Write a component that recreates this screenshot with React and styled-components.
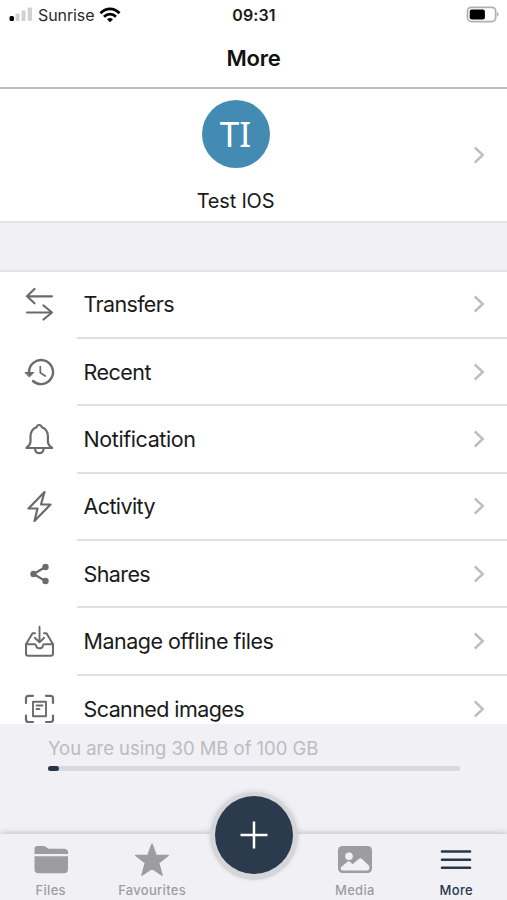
import React from "react";
import styled, { createGlobalStyle } from "styled-components";

const Global = createGlobalStyle`
  * { box-sizing: border-box; }
  body { margin: 0; background: #fff; font-family: Inter, "Liberation Sans", sans-serif; color: #1a1a1a; }
  svg { display: block; flex: none; }
`;

const Screen = styled.div`
  width: 507px;
  height: 900px;
  display: flex;
  flex-direction: column;
  overflow: hidden;
  background: #fff;
`;

const StatusBar = styled.header`
  height: 29px;
  flex: none;
  display: grid;
  grid-template-columns: 1fr auto 1fr;
  align-items: center;
  padding: 0 8px 0 9px;
`;

const Carrier = styled.div`
  display: flex;
  align-items: center;
  gap: 5px;
  font-size: 16px;
  letter-spacing: -0.1px;
  color: #2b2b2b;
`;

const Clock = styled.div`
  font-size: 16px;
  font-weight: 600;
  letter-spacing: 0.1px;
`;

const Battery = styled.div`
  display: flex;
  justify-content: flex-end;
`;

const TitleBar = styled.h1`
  height: 60px;
  flex: none;
  margin: 0;
  padding-top: 2px;
  display: flex;
  justify-content: center;
  font-size: 22px;
  line-height: 54px;
  font-weight: 600;
  letter-spacing: -0.2px;
  color: #111;
  border-bottom: 2px solid #bdbdbf;
`;

const Profile = styled.section`
  height: 132px;
  flex: none;
  display: grid;
  grid-template-columns: 473px 1fr;
  align-items: center;
`;

const Person = styled.div`
  display: flex;
  flex-direction: column;
  align-items: center;
  padding: 3px 2px 0 0;
`;

const Avatar = styled.div`
  width: 68px;
  height: 68px;
  border-radius: 50%;
  background: #448bb3;
  color: #fff;
  display: flex;
  align-items: center;
  justify-content: center;
  font-family: "Noto Sans", sans-serif;
  font-size: 35px;
  line-height: 68px;
`;

const PersonName = styled.div`
  margin-top: 20px;
  font-size: 20px;
  line-height: 26px;
  letter-spacing: -0.2px;
`;

const SectionGap = styled.div`
  height: 50.5px;
  flex: none;
  background: #f0f0f5;
  border-top: 2px solid #e4e4e6;
  border-bottom: 2px solid #e4e4e6;
`;

const Menu = styled.ul`
  height: 452.5px;
  flex: none;
  margin: 0;
  padding: 0;
  overflow: hidden;
  list-style: none;
`;

const MenuItem = styled.li`
  height: 67.4px;
  display: grid;
  grid-template-columns: 77px 1fr;
`;

const IconCell = styled.div`
  display: flex;
  align-items: center;
  padding: 0 0 2px 23px;
`;

const MenuBody = styled.div`
  display: flex;
  align-items: center;
  justify-content: space-between;
  padding: 0 22px 0 6.5px;
  border-bottom: 2px solid #e0e0e1;
`;

const MenuLabel = styled.span`
  font-size: 21.5px;
  line-height: 30px;
  letter-spacing: ${(p) => p.$tracking}px;
`;

const Storage = styled.section`
  height: 110px;
  flex: none;
  background: #f0f0f5;
  padding: 10px 47px 0 48px;
`;

const StorageText = styled.div`
  font-size: 18.5px;
  line-height: 28px;
  letter-spacing: -0.04px;
  color: #bcbcc0;
`;

const Track = styled.div`
  height: 5px;
  margin-top: 4px;
  border-radius: 3px;
  background: #d9d9de;
`;

const Used = styled.div`
  width: 11px;
  height: 5px;
  border-radius: 3px;
  background: #27374a;
`;

const TabBar = styled.nav`
  position: relative;
  height: 66px;
  flex: none;
  display: grid;
  grid-template-columns: repeat(5, 101.4px);
  background: #f1f1f5;
  box-shadow: 0 -1px 6px rgba(0, 0, 0, 0.2);
`;

const Tab = styled.div`
  display: flex;
  flex-direction: column;
  align-items: center;
  padding-top: 8px;
  color: ${(p) => (p.$active ? "#27374a" : "#9d9d9f")};
`;

const TabLabel = styled.span`
  margin-top: 3px;
  font-size: 13px;
  line-height: 18px;
  font-weight: 500;
  letter-spacing: 0.3px;
`;

const AddButton = styled.button`
  position: absolute;
  left: 215px;
  top: -38px;
  width: 78px;
  height: 78px;
  padding: 0;
  border: 0;
  border-radius: 50%;
  background: #2b3a4c;
  display: flex;
  align-items: center;
  justify-content: center;
  box-shadow: 0 1px 1px 5px #d5d6da, 0 0 4px 6px rgba(0, 0, 0, 0.07);
`;

const SignalIcon = () => (
  <svg width="24" height="16" viewBox="0 0 24 16">
    <rect x="0.5" y="9" width="4.5" height="5" rx="1.5" fill="#000" />
    <g fill="#d2d2d2">
      <rect x="6.5" y="6.5" width="4" height="7.5" rx="1" />
      <rect x="12.5" y="3.5" width="4" height="10.5" rx="1" />
      <rect x="18.7" y="0.5" width="4.3" height="13.5" rx="1" />
    </g>
  </svg>
);

const WifiIcon = () => (
  <svg width="22" height="16" viewBox="0 0 22 16" fill="none" stroke="#000" strokeWidth="2.8">
    <path d="M1.5 6.2C7 .5 15 .5 20.5 6.2" />
    <path d="M5 9.8C8.5 6.2 13.5 6.2 17 9.8" />
    <path d="M8 12.2Q11 9.8 14 12.2L11 15.2Z" fill="#000" stroke="none" />
  </svg>
);

const BatteryIcon = () => (
  <svg width="33" height="17" viewBox="0 0 33 17">
    <rect x="1.5" y="1.3" width="28.2" height="14.3" rx="4" fill="#fff" stroke="#b0b0b0" strokeWidth="1.7" />
    <rect x="3.7" y="3.5" width="15.2" height="10" rx="2" fill="#000" />
    <path d="M31 6v4.5q1.5-.7 1.5-2.25T31 6Z" fill="#b0b0b0" />
  </svg>
);

const Chevron = () => (
  <svg width="12" height="18" viewBox="0 0 12 18" fill="none" stroke="#bebebf" strokeWidth="2.4">
    <path d="M1.8 1.5 9.8 9l-8 7.5" />
  </svg>
);

const LineIcon = ({ children }) => (
  <svg
    width="33"
    height="34"
    viewBox="0 0 33 34"
    fill="none"
    stroke="#6b6b6b"
    strokeWidth="2.2"
    strokeLinecap="round"
    strokeLinejoin="round"
  >
    {children}
  </svg>
);

const menu = [
  {
    label: "Transfers",
    tracking: -0.65,
    icon: <path d="M29 9.3H4M11.5 2 4 9.3l7.5 7M4 25.5h25M20.5 18.5l8.5 7-8.5 7" />,
  },
  {
    label: "Recent",
    tracking: -0.5,
    icon: (
      <>
        <path d="M6 17A12 12 0 1 1 10 26" strokeWidth="2.4" />
        <path d="M2.3 17.5h8.5l-4.2 4.3Z" fill="#6b6b6b" strokeWidth="1" />
        <path d="M17.3 11.5v6.3l5 3.2" strokeWidth="1.7" />
      </>
    ),
  },
  {
    label: "Notification",
    tracking: -0.4,
    icon: (
      <>
        <path d="M16.2 3q-2 0-2.7 2.2Q7.5 7.5 7.5 14.5v5q0 3.5-4 6.5h25.7q-4.3-3-4.3-6.5v-5q0-7-6-9.3-.7-2.2-2.7-2.2Z" />
        <path d="M12 26.8q.5 4.4 4.3 4.4t4.4-4.4" />
      </>
    ),
  },
  {
    label: "Activity",
    tracking: -0.6,
    icon: <path d="M21.5 3 5.5 19.5h9L11.5 32 27.5 15.5H18Z" />,
  },
  {
    label: "Shares",
    tracking: -0.6,
    icon: (
      <>
        <path d="M22.5 10 10.5 17l12 7" />
        <g fill="#6b6b6b" stroke="none">
          <circle cx="22.5" cy="10" r="3.2" />
          <circle cx="10.5" cy="17" r="3.2" />
          <circle cx="22.5" cy="24" r="3.2" />
        </g>
      </>
    ),
  },
  {
    label: "Manage offline files",
    tracking: -0.51,
    icon: (
      <>
        <path d="M12 9.3H9.5L3 20.3v9.5q0 2 2 2h23q2 0 2-2v-9.5L23.5 9.3H21" strokeWidth="2" />
        <path d="M3 20.3h8.5q1.5 0 1.7 1.5.3 2.5 3.3 2.5t3.3-2.5q.2-1.5 1.7-1.5H30M16.5 2.8V18M11.8 13.8l4.7 4.5 4.7-4.5" strokeWidth="1.9" />
      </>
    ),
  },
  {
    label: "Scanned images",
    tracking: -0.58,
    icon: (
      <>
        <path d="M3 11V6.3q0-2.5 2.5-2.5H10M23 3.8h4.5Q30 3.8 30 6.3V11M30 23.5v4q0 2.5-2.5 2.5H23M10 30H5.5Q3 30 3 27.5v-4" />
        <path d="M10 9.7h13v14.6H10ZM13.5 13.5h6M13.5 17h3" strokeWidth="1.9" />
      </>
    ),
  },
];

const FolderIcon = () => (
  <svg width="36" height="36" viewBox="0 0 36 36" fill="currentColor">
    <path d="M1.5 12V6.7Q1.5 4 4.5 4h5.5q2 0 3.3 1.3T16 6.8h15q4 0 4 3.5V12ZM1.5 14.3H35v13q0 4-4 4H5.5q-4 0-4-4Z" />
  </svg>
);

const StarIcon = () => (
  <svg width="36" height="36" viewBox="0 0 36 36" fill="currentColor" stroke="currentColor" strokeWidth="1.5" strokeLinejoin="round">
    <path d="m18 2.2 4 11 12.2.3-9.6 7.3 3.4 12.4-10-7-10 7 3.4-12.4L1.8 13.5l12.2-.3Z" />
  </svg>
);

const PictureIcon = () => (
  <svg width="36" height="36" viewBox="0 0 36 36">
    <rect x="1" y="4" width="34" height="27" rx="4.5" fill="currentColor" />
    <circle cx="12" cy="14.2" r="3.8" fill="#f1f1f5" />
    <path d="M3.7 26.5v-1l7-6q1-.7 2 0l2.8 2.7 6.7-5.4q1.3-1 2.6 0l7.5 7.2v2.4q0 2-2 2H5.7q-2 0-2-1.9Z" fill="#f1f1f5" />
  </svg>
);

const BarsIcon = () => (
  <svg width="36" height="36" viewBox="0 0 36 36" stroke="currentColor" strokeWidth="2.6" strokeLinecap="round">
    <path d="M4 9.5h28M4 17.7h28M4 25.8h28" />
  </svg>
);

export default function App() {
  return (
    <Screen>
      <Global />
      <StatusBar>
        <Carrier>
          <SignalIcon />
          Sunrise
          <WifiIcon />
        </Carrier>
        <Clock>09:31</Clock>
        <Battery>
          <BatteryIcon />
        </Battery>
      </StatusBar>
      <TitleBar>More</TitleBar>
      <Profile>
        <Person>
          <Avatar>TI</Avatar>
          <PersonName>Test IOS</PersonName>
        </Person>
        <Chevron />
      </Profile>
      <SectionGap />
      <Menu>
        {menu.map(({ label, tracking, icon }) => (
          <MenuItem key={label}>
            <IconCell>
              <LineIcon>{icon}</LineIcon>
            </IconCell>
            <MenuBody>
              <MenuLabel $tracking={tracking}>{label}</MenuLabel>
              <Chevron />
            </MenuBody>
          </MenuItem>
        ))}
      </Menu>
      <Storage>
        <StorageText>You are using 30 MB of 100 GB</StorageText>
        <Track>
          <Used />
        </Track>
      </Storage>
      <TabBar>
        <Tab>
          <FolderIcon />
          <TabLabel>Files</TabLabel>
        </Tab>
        <Tab>
          <StarIcon />
          <TabLabel>Favourites</TabLabel>
        </Tab>
        <Tab />
        <Tab>
          <PictureIcon />
          <TabLabel>Media</TabLabel>
        </Tab>
        <Tab $active>
          <BarsIcon />
          <TabLabel>More</TabLabel>
        </Tab>
        <AddButton aria-label="Add">
          <svg width="30" height="30" viewBox="0 0 30 30" stroke="#fff" strokeWidth="2.5">
            <path d="M15 1.5v27M1.5 15h27" />
          </svg>
        </AddButton>
      </TabBar>
    </Screen>
  );
}
